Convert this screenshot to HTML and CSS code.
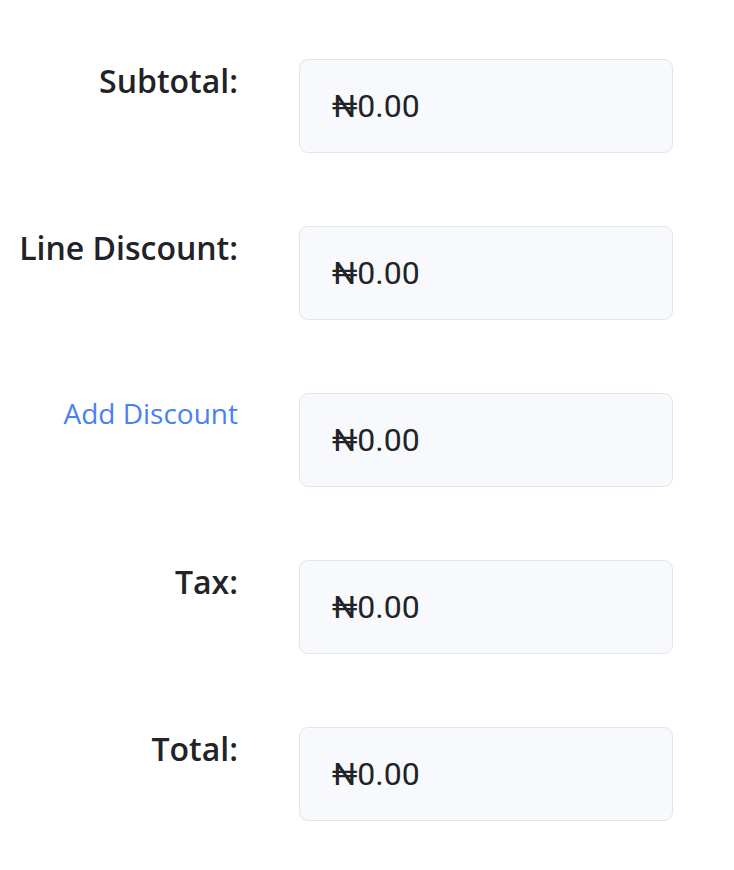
FILE: index.html
```html
<!DOCTYPE html>
<html lang="en">
<head>
<meta charset="utf-8">
<title>Totals</title>
<link rel="stylesheet" href="styles.css">
</head>
<body>
<div class="totals">
  <div class="label">Subtotal:</div>
  <div class="field">₦0.00</div>

  <div class="label">Line Discount:</div>
  <div class="field">₦0.00</div>

  <div class="label label--link"><a class="link" href="#">Add Discount</a></div>
  <div class="field">₦0.00</div>

  <div class="label">Tax:</div>
  <div class="field">₦0.00</div>

  <div class="label">Total:</div>
  <div class="field">₦0.00</div>
</div>
</body>
</html>
```
FILE: styles.css
```css
html, body {
  margin: 0;
  padding: 0;
  background: #ffffff;
}

.totals {
  display: grid;
  grid-template-columns: 238px 374px;
  column-gap: 61px;
  row-gap: 73px;
  padding-top: 59px;
}

.label {
  font-family: "Open Sans", sans-serif;
  font-weight: 600;
  font-size: 32px;
  line-height: 43px;
  color: #222326;
  text-align: right;
  white-space: nowrap;
}

.label--link {
  font-size: 28px;
  line-height: 40px;
  font-weight: 400;
}

.link {
  color: #4a80f5;
  text-decoration: none;
}

.field {
  box-sizing: border-box;
  height: 94px;
  display: flex;
  align-items: center;
  padding: 0 32px;
  background: #f8f9fd;
  border: 1.5px solid #e3e5ed;
  border-radius: 9px;
  font-family: Roboto, sans-serif;
  font-size: 32px;
  color: #222326;
}
```
